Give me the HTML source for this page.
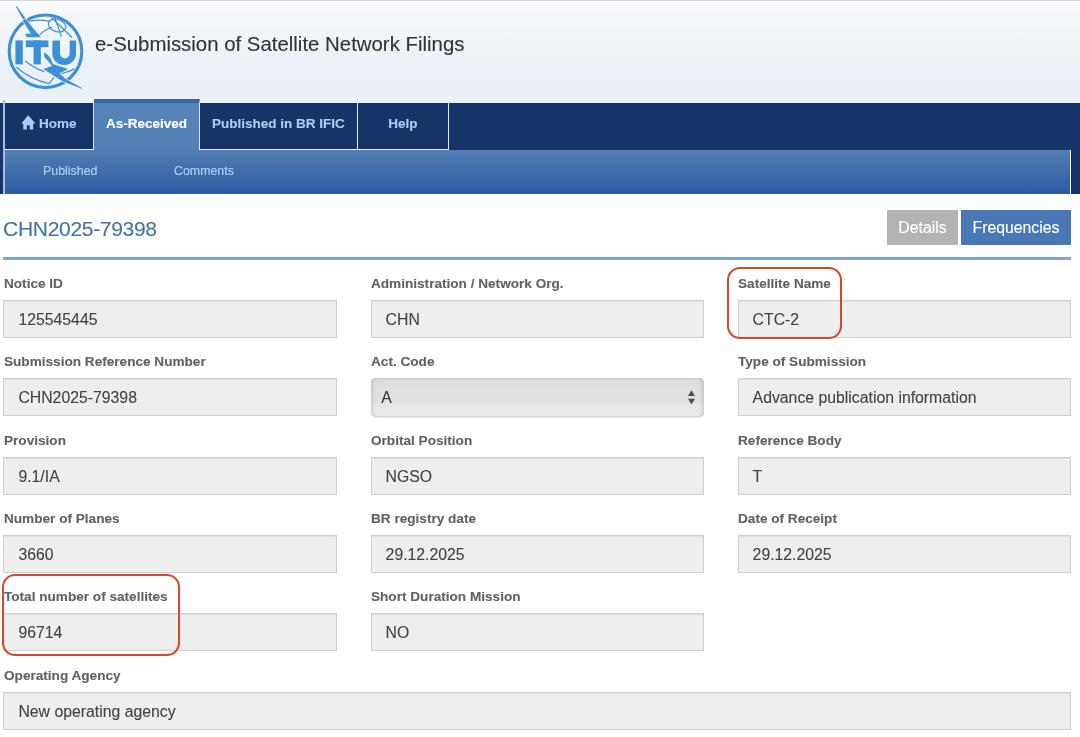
<!DOCTYPE html>
<html><head><meta charset="utf-8">
<style>
*{box-sizing:border-box;margin:0;padding:0}
html,body{width:1080px;height:737px;overflow:hidden;background:#fff}
body>*{will-change:transform}
body{font-family:"Liberation Sans",sans-serif;position:relative;-webkit-text-stroke:0.12px}
.abs{position:absolute}
#hdr{left:0;top:0;width:1080px;height:103px;background:linear-gradient(#f8fafc 0%,#eff4f8 40%,#e9f0f6 85%,#ecf2f7 100%);border-top:1px solid #d5d7da}
#title{left:94.5px;top:32.3px;font-size:20.4px;color:#333;white-space:nowrap;line-height:24px}
#nav{left:0;top:103px;width:1080px;height:91px;background:#163467}
.tab{position:absolute;top:0;height:47px;border-right:1px solid #dfe8f5;border-bottom:1.5px solid #eef3fb;color:#adcbf3;font-weight:bold;font-size:13.5px;text-align:center;line-height:42px;white-space:nowrap}
#sub{left:5px;top:150px;width:1066px;height:44px;background:linear-gradient(#537fb5,#2a5ba3);border-right:1px solid #f0f6ff}
#vline{left:3px;top:100px;width:2px;height:94px;background:#a9bbe3}
.sublink{position:absolute;top:163px;font-size:12.4px;color:#add3fc;white-space:nowrap;line-height:16px}
#h1{left:3px;top:216px;font-size:21.1px;letter-spacing:-0.35px;color:#4472a9;white-space:nowrap;line-height:26px}
#rule{left:3px;top:257px;width:1068px;height:3px;background:#80a4d6}
.btn{position:absolute;top:210px;height:35px;font-size:15.8px;color:#fff;text-align:center;line-height:35px}
.lbl{position:absolute;font-size:13.6px;font-weight:bold;color:#626262;white-space:nowrap;line-height:16px}
.inp{position:absolute;height:38px;background:#eee;border:1px solid #cfcfcf;box-shadow:inset 0 1px 1px rgba(0,0,0,.06);font-size:15.8px;color:#444;padding-left:13.6px;line-height:37px;white-space:nowrap}
.sel{position:absolute;height:38.5px;border-radius:5px;background:linear-gradient(#d6d6d6,#dedede 10%,#e1e1e1 55%,#ebebeb 85%,#eeeeee);box-shadow:inset 5px 0 4px -4px rgba(0,0,0,.14),inset -7px 0 4px -5px rgba(0,0,0,.12),inset 0 1px 0 rgba(0,0,0,.05),inset 0 -1px 1px rgba(0,0,0,.1),0 0.5px 1px rgba(0,0,0,.1);font-size:15.8px;color:#3a3a3a;padding-left:10.3px;line-height:39.3px}
.red{position:absolute;border:2.8px solid #d9462a;border-radius:13px}
</style></head><body>
<div id="hdr" class="abs"></div>
<svg class="abs" style="left:0;top:0" width="95" height="100" viewBox="0 0 95 100">
 <g fill="none" stroke="#3c90d6">
  <circle cx="45.5" cy="51.3" r="36.3" stroke-width="3.1"/>
  <path d="M26 21.8Q37.5 18.8 49 21.3" stroke-width="1.3"/>
  <path d="M39.5 34.7Q44 30.5 52 27" stroke-width="1.2"/>
  <ellipse cx="57" cy="25.5" rx="9" ry="6.2" transform="rotate(18 57 25.5)" stroke-width="1.1"/>
  <path d="M51.5 17.5L72 37.5M54.5 16.5L61.5 37" stroke-width="1.1"/>
    <path d="M25.3 61Q34 68 44.7 72M61.2 73.6Q68 72 74.6 68.8" stroke-width="1.3"/>
  <path d="M16.3 67.2Q30 79 49 83.6L54.2 77.3" stroke-width="1.2"/>
 </g>
 <g fill="#3c90d6">
  <rect x="15.4" y="40.4" width="7.4" height="24"/>
  <rect x="25.8" y="40.4" width="22.6" height="6.8"/>
  <rect x="33.6" y="40.4" width="7.2" height="24"/>
  <path d="M52.4 40.4h7.6v13.2a4.85 4.85 0 0 0 9.7 0V40.4H76v13.6a11.8 11 0 0 1-23.6 0z"/>
 </g>
 <path fill="#3c90d6" d="M15.9 6.7L16.8 6.2L25.8 18.7L23.3 19.8Z"/>
 <g fill="#3c90d6" stroke="#f6f8fb" stroke-width="1.1" paint-order="stroke">
  <path d="M22.8 20.6L25.4 18.4L33.4 28.6L41 37.3L26.7 37.3L25.1 33.8L30.8 33.8Z"/>
  <path d="M44.1 52.6C47 54 50.5 57 53 63.9L68.2 69.1L59.4 73.6L66 79L82.3 88.3L81.6 88.8L62.4 81.3L50.2 73.6L43.2 69.1L52 66C49 62 45.5 58.5 44.1 56.5Z"/>
 </g>
</svg>
<div id="title" class="abs">e-Submission of Satellite Network Filings</div>
<div id="nav" class="abs"></div>
<div id="sub" class="abs"></div>
<div id="vline" class="abs"></div>
<div class="abs" style="left:0;top:103px;width:1080px;height:91px">
 <div class="tab" style="left:5px;width:89px"><svg style="position:absolute;left:16px;top:12px" width="15" height="15" viewBox="0 0 15 15"><path fill="#adcbf3" d="M0.3 8.4L7.2 0.2L14.3 8.4L12.2 8.4L12.2 14.5L8.7 14.5L8.7 10.3L5.8 10.3L5.8 14.5L2.3 14.5L2.3 8.4Z"/></svg><span style="position:absolute;left:34px;top:0">Home</span></div>
 <div class="tab" style="left:94px;top:-4px;height:51px;width:106px;background:linear-gradient(#5784ba,#517fb6);border-top:4px solid #3a66a6;border-bottom:none;color:#fff">As-Received</div>
 <div class="tab" style="left:200px;width:158px">Published in BR IFIC</div>
 <div class="tab" style="left:358px;width:91px">Help</div>
</div>
<div class="sublink" style="left:43px">Published</div>
<div class="sublink" style="left:174px">Comments</div>

<div id="h1" class="abs">CHN2025-79398</div>
<div class="btn" style="left:887px;width:71px;background:#b3b3b3">Details</div>
<div class="btn" style="left:961px;width:110px;background:#4a78b6">Frequencies</div>
<div id="rule" class="abs"></div>

<!-- row 1 -->
<div class="lbl" style="left:4px;top:276px">Notice ID</div>
<div class="inp" style="padding-left:14.4px;left:3px;top:300px;width:334px">125545445</div>
<div class="lbl" style="left:371px;top:276px">Administration / Network Org.</div>
<div class="inp" style="left:371px;top:300px;width:333px">CHN</div>
<div class="lbl" style="left:738px;top:276px">Satellite Name</div>
<div class="inp" style="left:738px;top:300px;width:333px">CTC-2</div>
<!-- row 2 -->
<div class="lbl" style="left:4px;top:354.3px">Submission Reference Number</div>
<div class="inp" style="padding-left:14.4px;left:3px;top:378.3px;width:334px">CHN2025-79398</div>
<div class="lbl" style="left:371px;top:354.3px">Act. Code</div>
<div class="sel" style="left:371px;top:378px;width:333px">A<svg style="position:absolute;right:8px;top:12px" width="9" height="15" viewBox="0 0 9 15"><path fill="#4f4f4f" d="M1 6L4.5 0.2L8 6Z M1 8.8L4.5 14.6L8 8.8Z"/></svg></div>
<div class="lbl" style="left:738px;top:354.3px">Type of Submission</div>
<div class="inp" style="left:738px;top:378.3px;width:333px">Advance publication information</div>
<!-- row 3 -->
<div class="lbl" style="left:4px;top:432.7px">Provision</div>
<div class="inp" style="padding-left:14.4px;left:3px;top:456.7px;width:334px">9.1/IA</div>
<div class="lbl" style="left:371px;top:432.7px">Orbital Position</div>
<div class="inp" style="left:371px;top:456.7px;width:333px">NGSO</div>
<div class="lbl" style="left:738px;top:432.7px">Reference Body</div>
<div class="inp" style="left:738px;top:456.7px;width:333px">T</div>
<!-- row 4 -->
<div class="lbl" style="left:4px;top:511px">Number of Planes</div>
<div class="inp" style="padding-left:14.4px;left:3px;top:535px;width:334px">3660</div>
<div class="lbl" style="left:371px;top:511px">BR registry date</div>
<div class="inp" style="left:371px;top:535px;width:333px">29.12.2025</div>
<div class="lbl" style="left:738px;top:511px">Date of Receipt</div>
<div class="inp" style="left:738px;top:535px;width:333px">29.12.2025</div>
<!-- row 5 -->
<div class="lbl" style="left:4px;top:589.3px">Total number of satellites</div>
<div class="inp" style="padding-left:14.4px;left:3px;top:613.3px;width:334px">96714</div>
<div class="lbl" style="left:371px;top:589.3px">Short Duration Mission</div>
<div class="inp" style="left:371px;top:613.3px;width:333px">NO</div>
<!-- row 6 -->
<div class="lbl" style="left:4px;top:667.7px">Operating Agency</div>
<div class="inp" style="padding-left:14.4px;left:3px;top:691.7px;width:1068px">New operating agency</div>

<div class="red" style="left:727px;top:267px;width:115px;height:72px"></div>
<div class="red" style="left:2px;top:574px;width:178px;height:82px"></div>
</body></html>
